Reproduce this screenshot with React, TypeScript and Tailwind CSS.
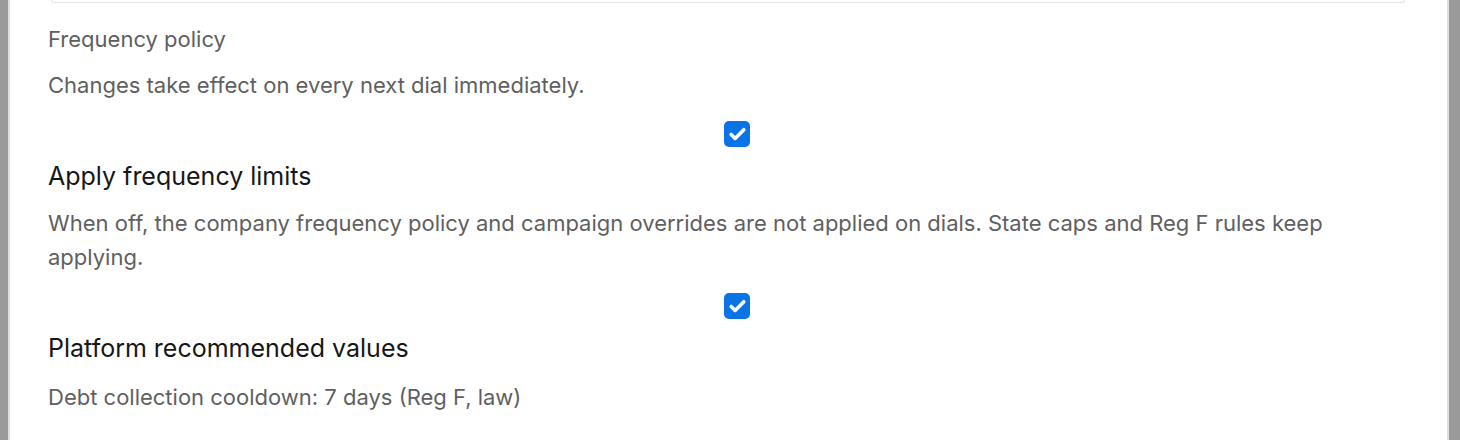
import { Check } from 'lucide-react';

function Toggle() {
  return (
    <div className="flex justify-center">
      <span className="flex h-[26px] w-[26px] items-center justify-center rounded-[5px] bg-[#0a74e6]">
        <Check className="h-[19px] w-[19px] text-white" strokeWidth={4.5} />
      </span>
    </div>
  );
}

export default function App() {
  return (
    <div
      className="flex h-[440px] w-[1460px] overflow-hidden bg-white"
      style={{ fontFamily: 'Inter, "Noto Sans", sans-serif' }}
    >
      <div className="w-[8px] bg-[#9a9a9a]" />
      <div className="w-[2px] bg-[#dedede]" />
      <main className="flex-1 pl-[38px] pr-[21px]">
        <div className="ml-[3px] mr-[21px] h-[3px] rounded-b-[14px] border-x border-b border-[#e3e3e3]" />

        <p className="mt-[22px] text-[22px] leading-[28px] text-[#5f5f5f]">Frequency policy</p>
        <p className="mt-[18px] text-[22px] leading-[28px] text-[#5f5f5f]">
          Changes take effect on every next dial immediately.
        </p>

        <div className="mt-[22px]">
          <Toggle />
        </div>
        <h3 className="mt-[14px] text-[25px] leading-[30px] text-[#161616]">Apply frequency limits</h3>
        <p className="mt-[15px] max-w-[1300px] text-[22px] leading-[34px] text-[#5f5f5f]">
          When off, the company frequency policy and campaign overrides are not applied on dials. State caps and Reg F
          rules keep applying.
        </p>

        <div className="mt-[19px]">
          <Toggle />
        </div>
        <h3 className="mt-[14px] text-[25px] leading-[30px] text-[#161616]">Platform recommended values</h3>
        <p className="mt-[20px] text-[22px] leading-[28px] text-[#5f5f5f]">
          Debt collection cooldown: 7 days (Reg F, law)
        </p>
      </main>
      <div className="w-[2px] bg-[#dedede]" />
      <div className="w-[11px] bg-[#9a9a9a]" />
    </div>
  );
}
